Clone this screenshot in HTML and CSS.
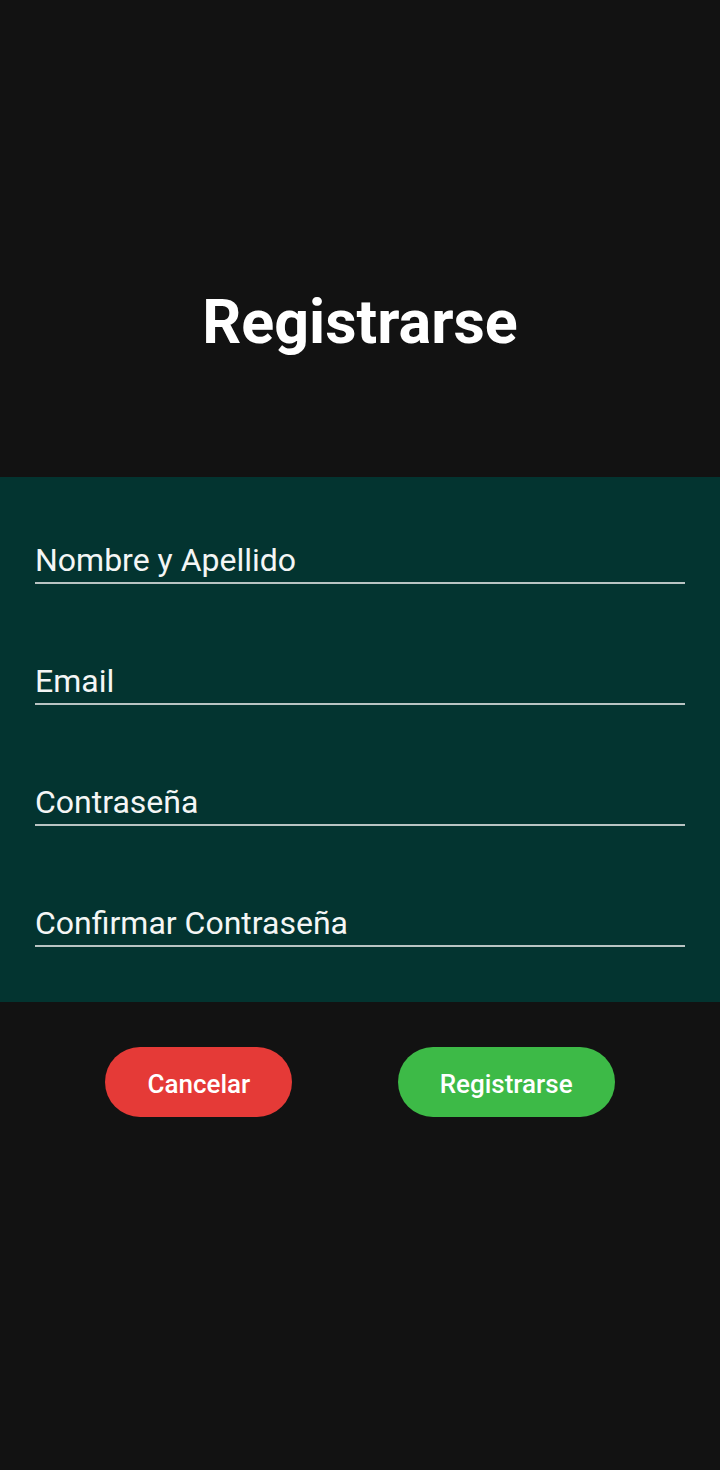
FILE: index.html
```html
<!DOCTYPE html>
<html lang="es">
<head>
<meta charset="utf-8">
<title>Registrarse</title>
<link rel="stylesheet" href="styles.css">
</head>
<body>
<div class="screen">
  <header class="header">
    <h1 class="title">Registrarse</h1>
  </header>
  <section class="form">
    <div class="field">Nombre y Apellido</div>
    <div class="field">Email</div>
    <div class="field">Contraseña</div>
    <div class="field">Confirmar Contraseña</div>
  </section>
  <div class="actions">
    <button class="btn btn-cancel">Cancelar</button>
    <button class="btn btn-register">Registrarse</button>
  </div>
</div>
</body>
</html>
```

FILE: styles.css
```css
* { box-sizing: border-box; }
html, body {
  margin: 0;
  padding: 0;
  background: #121212;
}
body {
  font-family: Roboto, "Liberation Sans", sans-serif;
  color: #f7f7f7;
}
.screen {
  width: 720px;
  height: 1470px;
  background: #121212;
}
.header {
  height: 477px;
  padding-top: 287px;
  text-align: center;
}
.title {
  margin: 0;
  font-size: 61px;
  font-weight: 700;
  line-height: 70px;
  color: #ffffff;
}
.form {
  background: #033430;
  padding: 65px 35px 55px 35px;
  display: flex;
  flex-direction: column;
  gap: 79px;
}
.field {
  font-size: 32px;
  line-height: 36px;
  padding-bottom: 4px;
  border-bottom: 2px solid #b9c4c3;
  color: #f4f6f5;
}
.actions {
  display: flex;
  justify-content: space-evenly;
  padding-top: 45px;
}
.btn {
  height: 70px;
  border: none;
  border-radius: 35px;
  font-family: Roboto, "Liberation Sans", sans-serif;
  font-size: 26px;
  font-weight: 500;
  color: #ffffff;
  padding: 3px 0 0 0;
}
.btn-cancel {
  width: 187px;
  background: #e53a37;
}
.btn-register {
  width: 217px;
  background: #3dba47;
}
```
